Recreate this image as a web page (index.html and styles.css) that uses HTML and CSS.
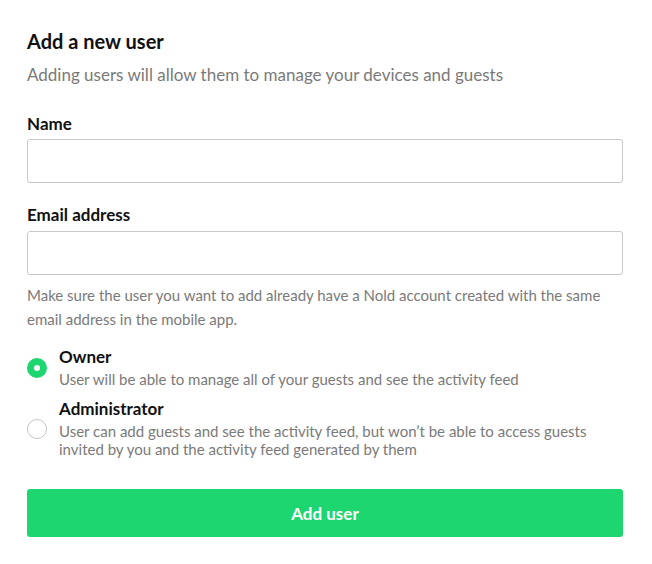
FILE: index.html
```html
<!DOCTYPE html>
<html>
<head>
<meta charset="utf-8">
<link rel="stylesheet" href="styles.css">
</head>
<body>
<div class="page">
  <h1 class="title">Add a new user</h1>
  <p class="subtitle">Adding users will allow them to manage your devices and guests</p>

  <div class="field">
    <label class="label">Name</label>
    <div class="input"></div>
  </div>

  <div class="field field-email">
    <label class="label">Email address</label>
    <div class="input"></div>
    <p class="help">Make sure the user you want to add already have a Nold account created with the same email address in the mobile app.</p>
  </div>

  <div class="roles">
    <div class="role">
      <span class="radio radio-on"></span>
      <div class="role-text">
        <div class="role-name">Owner</div>
        <div class="role-desc">User will be able to manage all of your guests and see the activity feed</div>
      </div>
    </div>
    <div class="role">
      <span class="radio"></span>
      <div class="role-text">
        <div class="role-name">Administrator</div>
        <div class="role-desc">User can add guests and see the activity feed, but won’t be able to access guests invited by you and the activity feed generated by them</div>
      </div>
    </div>
  </div>

  <div class="button">Add user</div>
</div>
</body>
</html>
```

FILE: styles.css
```css
* { box-sizing: border-box; }
html, body { margin: 0; padding: 0; background: #fff; }
body { font-family: Lato, "Open Sans", sans-serif; color: #111; }
.page { padding: 28px 29px 0 27px; }
.title { margin: 0; font-size: 20px; font-weight: 700; line-height: 26px; }
.subtitle { margin: 9px 0 0; font-size: 17px; line-height: 24px; color: #7a7a7a; }
.field { margin-top: 27px; }
.field-email { margin-top: 22px; }
.label { display: block; font-size: 17px; font-weight: 700; line-height: 20px; }
.input { margin-top: 5px; height: 44px; border: 1px solid #c8c8c8; border-radius: 3px; }
.field-email .input { margin-top: 6px; }
.help { margin: 8px 0 0; font-size: 15px; line-height: 24px; color: #7a7a7a; }
.roles { margin-top: 16px; display: flex; flex-direction: column; gap: 11px; }
.role { display: flex; align-items: center; gap: 12px; }
.radio { flex: none; width: 20px; height: 20px; border-radius: 50%; border: 1px solid #c4c4c4; }
.radio-on { border: 7px solid #1ed66f; }
.role-name { font-size: 17px; font-weight: 700; line-height: 20px; }
.role-desc { margin-top: 3px; font-size: 15px; line-height: 18px; color: #7a7a7a; }
.button { margin-top: 31px; height: 48px; background: #1ed66f; border-radius: 3px; color: #fff; font-size: 17px; font-weight: 700; display: flex; align-items: center; justify-content: center; }
```
